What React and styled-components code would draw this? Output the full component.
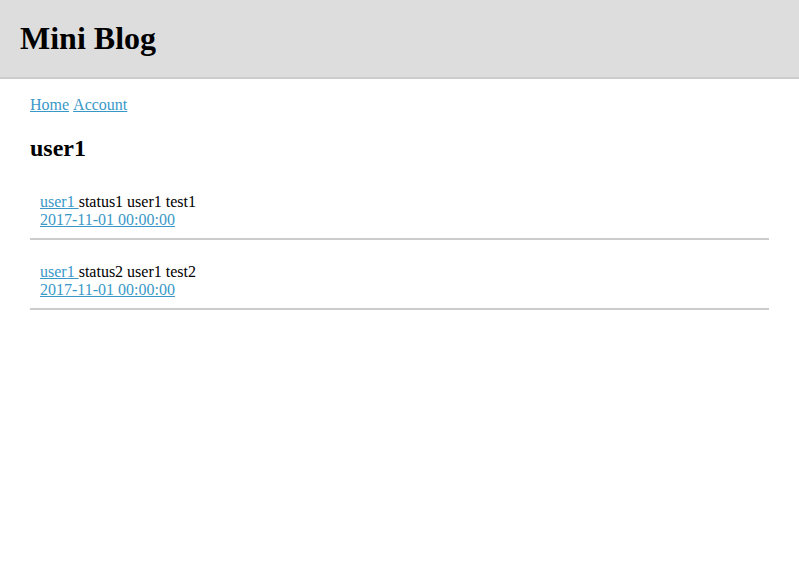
import React from "react";
import styled, { createGlobalStyle } from "styled-components";

const Global = createGlobalStyle`
  html, body { margin: 0; padding: 0; background: #fff; }
  body { font-family: "Liberation Serif", "Times New Roman", serif; font-size: 16px; color: #000; }
`;

const Header = styled.header`
  background: #dddddd;
  padding: 20px;
  border-bottom: 2px solid #cccccc;
`;

const Title = styled.h1`
  margin: 0;
  font-size: 32px;
  font-weight: bold;
`;

const Main = styled.main`
  padding: 17px 30px;
`;

const Nav = styled.nav`
  display: flex;
  gap: 4px;
`;

const Link = styled.a`
  color: #3a98c8;
  text-decoration: underline;
`;

const Heading = styled.h2`
  font-size: 24px;
  margin: 21px 0;
`;

const Post = styled.div`
  margin: 13px 0 0;
  padding: 10px 10px 9px;
  border-bottom: 2px solid #cccccc;
`;

const posts = [
  { text: "status1 user1 test1", date: "2017-11-01 00:00:00" },
  { text: "status2 user1 test2", date: "2017-11-01 00:00:00" },
];

export default function App() {
  return (
    <>
      <Global />
      <Header>
        <Title>Mini Blog</Title>
      </Header>
      <Main>
        <Nav>
          <Link href="#">Home</Link>
          <Link href="#">Account</Link>
        </Nav>
        <Heading>user1</Heading>
        {posts.map((p, i) => (
          <Post key={i}>
            <div>
              <Link href="#">user1 </Link>
              {p.text}
            </div>
            <div>
              <Link href="#">{p.date}</Link>
            </div>
          </Post>
        ))}
      </Main>
    </>
  );
}
